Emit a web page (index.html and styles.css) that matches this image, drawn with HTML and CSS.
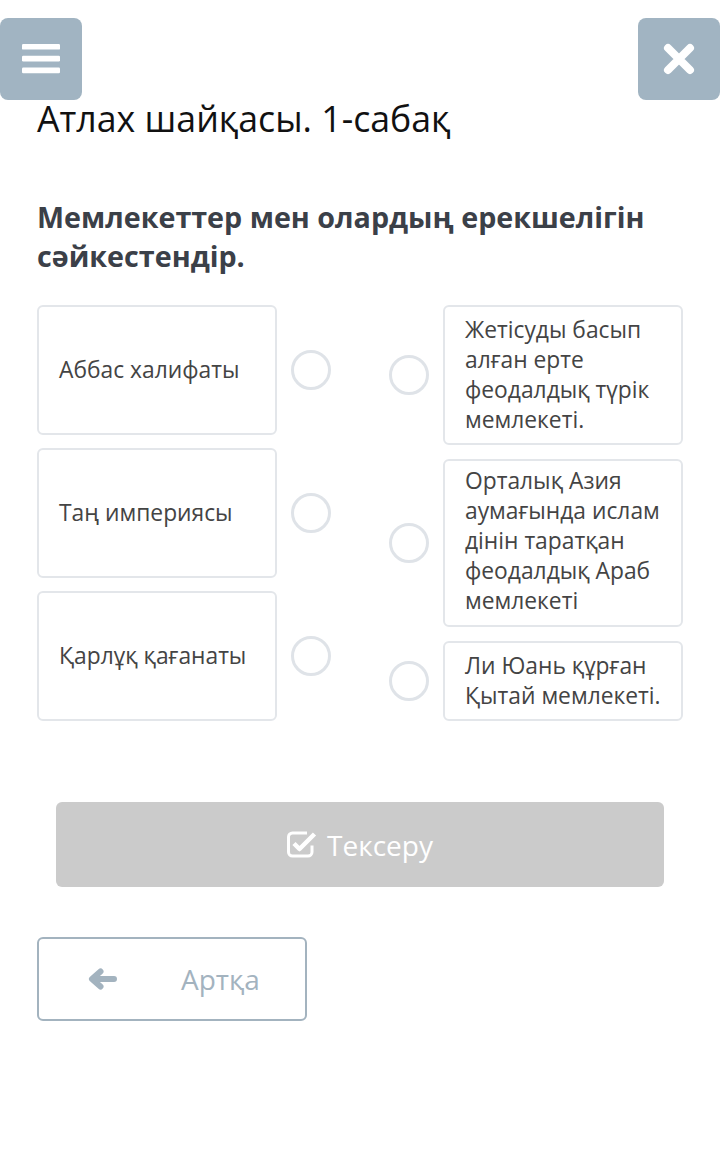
FILE: index.html
```html
<!DOCTYPE html>
<html lang="kk">
<head>
<meta charset="utf-8">
<title>Атлах шайқасы</title>
<link rel="stylesheet" href="styles.css">
</head>
<body>
<button class="corner-btn menu-btn" aria-label="Меню">
  <svg width="38" height="30" viewBox="0 0 38 30"><rect x="0" y="0" width="38" height="5.6" rx="1.2" fill="#fff"/><rect x="0" y="11.8" width="38" height="5.6" rx="1.2" fill="#fff"/><rect x="0" y="23.6" width="38" height="5.6" rx="1.2" fill="#fff"/></svg>
</button>
<button class="corner-btn close-btn" aria-label="Жабу">
  <svg width="34" height="34" viewBox="0 0 34 34"><path d="M6 6 L28 28 M28 6 L6 28" stroke="#fff" stroke-width="8" stroke-linecap="round"/></svg>
</button>

<main class="page">
  <h1 class="title">Атлах шайқасы. 1-сабақ</h1>
  <h2 class="question">Мемлекеттер мен олардың ерекшелігін сәйкестендір.</h2>

  <div class="match">
    <div class="col col-left">
      <div class="row"><div class="card card-left">Аббас халифаты</div><span class="dot"></span></div>
      <div class="row"><div class="card card-left">Таң империясы</div><span class="dot"></span></div>
      <div class="row"><div class="card card-left">Қарлұқ қағанаты</div><span class="dot"></span></div>
    </div>
    <div class="col col-right">
      <div class="row"><span class="dot"></span><div class="card card-right">Жетісуды басып алған ерте феодалдық түрік мемлекеті.</div></div>
      <div class="row"><span class="dot"></span><div class="card card-right card-tight">Орталық Азия аумағында ислам дінін таратқан феодалдық Араб мемлекеті</div></div>
      <div class="row"><span class="dot"></span><div class="card card-right">Ли Юань құрған Қытай мемлекеті.</div></div>
    </div>
  </div>

  <div class="check-wrap">
    <button class="check-btn">
      <svg width="30" height="28" viewBox="0 0 30 28"><path d="M20 3 H5.5 a4 4 0 0 0 -4 4 V22 a4 4 0 0 0 4 4 H21 a4 4 0 0 0 4 -4 V15.5" fill="none" stroke="#fff" stroke-width="3"/><path d="M7 13.5 L12.5 19 L27.5 4" fill="none" stroke="#fff" stroke-width="4.5" stroke-linejoin="round"/></svg>
      <span>Тексеру</span>
    </button>
  </div>

  <button class="back-btn">
    <svg width="30" height="24" viewBox="0 0 30 24"><path d="M27 12 H6 M13.5 4.5 L5 12 L13.5 19.5" fill="none" stroke="#a3b3bf" stroke-width="6" stroke-linecap="round" stroke-linejoin="round"/></svg>
    <span>Артқа</span>
  </button>
</main>
</body>
</html>
```

FILE: styles.css
```css
* { box-sizing: border-box; }
html, body { margin: 0; padding: 0; background: #fff; }
body {
  font-family: "Open Sans", "Noto Sans", "DejaVu Sans", sans-serif;
  color: #111;
  width: 720px;
  min-height: 1172px;
  position: relative;
}
.corner-btn {
  position: absolute;
  top: 18px;
  width: 82px;
  height: 82px;
  border: 0;
  border-radius: 8px;
  background: #a1b4c2;
  display: flex;
  align-items: center;
  justify-content: center;
  padding: 0;
}
.menu-btn { left: 0; }
.close-btn { right: 0; }

.page {
  padding: 95px 37px 0;
}
.title {
  margin: 0;
  font-size: 35.7px;
  line-height: 46px;
  font-weight: 400;
  color: #111;
}
.question {
  margin: 56px 0 0;
  font-size: 28.7px;
  line-height: 39px;
  font-weight: 700;
  color: #3b4048;
  padding-right: 10px;
}
.match {
  margin-top: 30px;
  display: flex;
  justify-content: space-between;
}
.col {
  display: flex;
  flex-direction: column;
}
.col-left { gap: 13px; }
.col-right { gap: 14px; }
.row {
  display: flex;
  align-items: center;
  gap: 14px;
}
.card {
  width: 240px;
  border: 2px solid #e3e6ea;
  border-radius: 6px;
  background: #fff;
  font-size: 22.8px;
  line-height: 30px;
  color: #444;
  padding: 0 20px;
}
.card-left {
  height: 130px;
  display: flex;
  align-items: center;
}
.card-right {
  padding-top: 8px;
  padding-bottom: 8px;
}
.card-right.card-tight {
  padding-top: 5px;
  padding-bottom: 9px;
}
.dot {
  width: 40px;
  height: 40px;
  border-radius: 50%;
  border: 3px solid #dfe3e8;
  flex: none;
}
.check-wrap {
  padding: 81px 19px 0;
}
.check-btn {
  width: 100%;
  height: 85px;
  border: 0;
  border-radius: 6px;
  background: #cbcbcb;
  color: #fff;
  font-family: inherit;
  font-size: 28px;
  display: flex;
  align-items: center;
  justify-content: center;
  gap: 10px;
  padding: 0;
}
.check-btn svg { margin-top: -2px; }
.back-btn {
  margin-top: 50px;
  width: 270px;
  height: 84px;
  border: 2px solid #a3b3bf;
  border-radius: 6px;
  background: #fff;
  color: #a3b3bf;
  font-family: inherit;
  font-size: 28px;
  display: flex;
  align-items: center;
  gap: 64px;
  padding: 0 0 0 48px;
}
```
